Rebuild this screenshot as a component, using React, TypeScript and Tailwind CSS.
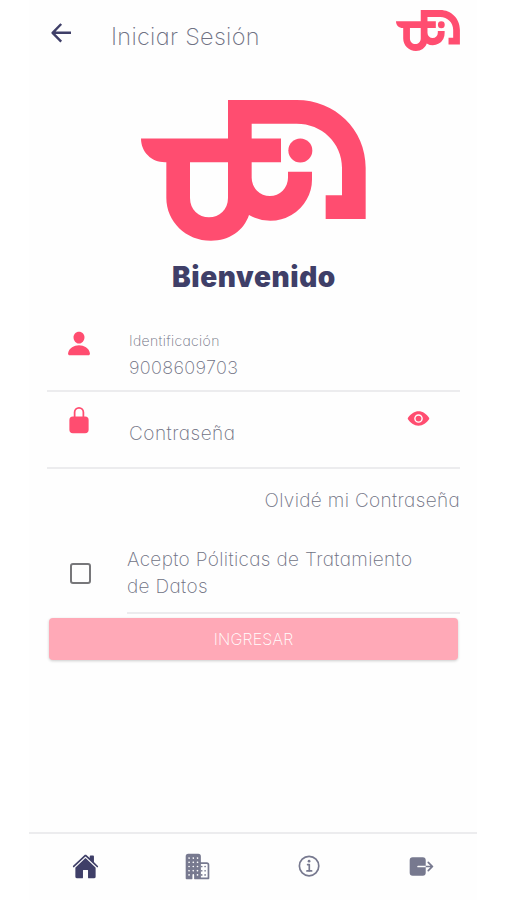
import { useState } from 'react';
import { IoPerson, IoLockClosed, IoEye, IoHome, IoBusiness, IoInformationCircleOutline, IoExit } from 'react-icons/io5';
import clsx from 'clsx';

function Logo({ className }: { className?: string }) {
  return (
    <svg viewBox="33 32 675 422" preserveAspectRatio="none" className={className} fill="#ff4d70">
      <path
        fillRule="evenodd"
        d="M294 32H500C615 32 707 120 707 235V388H587V317H636V235C636 160 575 103 500 103H365V147H453V218H365V265A54.5 54.5 0 0 0 474 265V247H546V265A125 125 0 0 1 357 376C341 423 298 453 243 453C167 453 109 395 109 325V218H105C64 218 33 187 33 147H294ZM180 218V325C180 360 206 383 237 383C268 383 294 360 294 325V218Z"
      />
      <circle cx="511" cy="183" r="36" />
    </svg>
  );
}

function ArrowBack() {
  return (
    <svg viewBox="0 0 20 20" className="h-5 w-5" fill="none" stroke="#3f3f68" strokeWidth="2.4" strokeLinejoin="round">
      <path d="M10.2 1 1.6 9.8l8.6 8.8M2 9.8h18" />
    </svg>
  );
}

const TABS = [
  { id: 'inicio', icon: IoHome },
  { id: 'empresas', icon: IoBusiness },
  { id: 'info', icon: IoInformationCircleOutline },
  { id: 'salir', icon: IoExit },
];

export default function App() {
  const [accepted, setAccepted] = useState(false);
  const [showPassword, setShowPassword] = useState(false);
  const [tab, setTab] = useState('inicio');

  return (
    <div className="h-[900px] w-[507px] overflow-hidden bg-white font-['Inter',sans-serif] font-extralight text-[#6f7183] [font-feature-settings:'cv11']">
      <div className="ml-[29px] flex h-full w-[448px] flex-col bg-[#fefefe]">
        {/* Header */}
        <header className="flex h-[72px] items-start pl-[22px] pr-[17px]">
          <button className="mt-[23px]" aria-label="Volver">
            <ArrowBack />
          </button>
          <h1 className="ml-10 mt-5 flex-1 whitespace-nowrap text-[23.5px] leading-[34px] tracking-[0.3px]">
            Iniciar Sesión
          </h1>
          <Logo className="mt-[10px] h-[41px] w-16" />
        </header>

        <Logo className="ml-[112px] mt-[28px] h-[141px] w-[225px] shrink-0" />
        <h2 className="mt-[18px] pl-[2px] text-center text-[28px] font-black leading-9 tracking-[0.6px] text-[#3f3f68]">
          Bienvenido
        </h2>

        {/* Form */}
        <div className="ml-[18px] mt-[26px] w-[413px]">
          <div className="flex h-[71px] border-b-2 border-[#ececee] pl-[18px]">
            <IoPerson className="mt-[9px] h-[27px] w-7 text-[#ff4d70]" />
            <div className="ml-[36px] pt-[10px]">
              <label className="block text-[14px] leading-5 tracking-[0.35px]">Identificación</label>
              <p className="mt-[3px] text-[18px] leading-7 tracking-[0.35px]">9008609703</p>
            </div>
          </div>

          <div className="flex h-[77px] border-b-2 border-[#ececee] pl-[18px]">
            <IoLockClosed className="mt-[14px] h-7 w-7 text-[#ff4d70]" />
            <input
              type={showPassword ? 'text' : 'password'}
              placeholder="Contraseña"
              className="ml-[36px] mt-[28px] h-7 w-[200px] bg-transparent text-[19px] tracking-[0.5px] outline-none placeholder:text-[#6f7183] placeholder:opacity-100"
            />
            <button className="ml-auto mr-[30px] mt-[15px] h-[23px]" onClick={() => setShowPassword(!showPassword)} aria-label="Ver">
              <IoEye className="h-[23px] w-[23px] text-[#ff4d70]" />
            </button>
          </div>

          <a className="mt-[18px] block text-right text-[19px] leading-7 tracking-[0.35px]">Olvidé mi Contraseña</a>

          <div className="mt-[30px] flex h-[69px]">
            <button
              onClick={() => setAccepted(!accepted)}
              className={clsx(
                'ml-[23px] mt-[18px] h-[21px] w-[21px] shrink-0 rounded-[3px] border-2 border-[#77777a]',
                accepted && 'bg-[#ff4d70]'
              )}
              aria-label="Aceptar"
            />
            <p className="ml-[36px] w-[333px] border-b-2 border-[#ececee] pt-px text-[19px] leading-[27px] tracking-[0.35px]">
              Acepto Póliticas de Tratamiento
              <br />
              de Datos
            </p>
          </div>

          <button className="ml-[2px] mt-[4px] block h-[42px] w-[409px] rounded-[4px] bg-[#ffa9b7] text-[16px] tracking-[0.2px] text-white shadow-[0_1px_3px_rgba(0,0,0,0.2)]">
            INGRESAR
          </button>
        </div>

        {/* Tab bar */}
        <nav className="mt-auto flex h-[68px] border-t-2 border-[#ececee]">
          {TABS.map(({ id, icon: Icon }) => (
            <button
              key={id}
              onClick={() => setTab(id)}
              className={clsx('flex flex-1 justify-center pt-[19px]', tab === id ? 'text-[#3f3f68]' : 'text-[#77798f]')}
            >
              <Icon className="h-[27px] w-[27px]" />
            </button>
          ))}
        </nav>
      </div>
    </div>
  );
}
